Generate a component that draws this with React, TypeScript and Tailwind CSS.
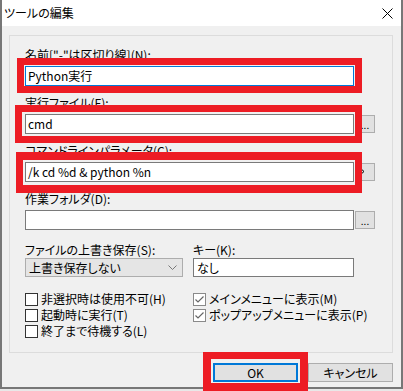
import React from "react";

function Field({ label, value, focused, btn }: { label: string; value: string; focused?: boolean; btn?: string }) {
  return (
    <div className="flex flex-col">
      <div className="h-[16px] leading-[16px] whitespace-nowrap">{label}</div>
      <div className="mt-[3px] flex items-center">
        <div
          className={`w-[329px] h-[20px] bg-white border ${focused ? "border-[#0078d7]" : "border-[#7a7a7a]"} flex items-center pl-[2px] leading-[16px] whitespace-nowrap`}
        >
          {value}
        </div>
        {btn && (
          <div className="ml-[1px] w-[20px] h-[18px] bg-[#e1e1e1] border border-[#adadad] flex items-end justify-center text-[10px] leading-[12px] pb-[1px]">
            {btn === ">" ? (
              <svg width="6" height="9" viewBox="0 0 6 9" className="mb-[3px] -ml-[6px]">
                <path d="M0.5 0.5L5 4.5L0.5 8.5" stroke="#000" strokeWidth="1" fill="none" />
              </svg>
            ) : (
              <span>...</span>
            )}
          </div>
        )}
      </div>
    </div>
  );
}

function Check({ label, checked }: { label: string; checked?: boolean }) {
  return (
    <div className="h-[16px] flex items-center whitespace-nowrap">
      <div
        className={`w-[13px] h-[13px] bg-white border ${checked ? "border-[#8a8a8a]" : "border-[#333333]"} flex items-center justify-center`}
      >
        {checked && (
          <svg width="11" height="11" viewBox="0 0 11 11">
            <path d="M1.5 5.5L4 8L9.5 2.5" stroke="#666" strokeWidth="1.2" fill="none" />
          </svg>
        )}
      </div>
      <span className="ml-[3px] leading-[16px]">{label}</span>
    </div>
  );
}

export default function App() {
  return (
    <div className="relative w-[403px] h-[391px] bg-[#e8e8e8] font-['Noto_Sans_CJK_JP',sans-serif] [font-feature-settings:'palt'] text-[12px] leading-[16px] text-black overflow-hidden">
      <div className="flex flex-col w-[403px] h-[389px] bg-[#f0f0f0] border-l-2 border-r-2 border-b-2 border-[#777777]">
        {/* title bar */}
        <div className="h-[26px] shrink-0 bg-white flex items-center justify-between pl-[2px] pr-[8px]">
          <span className="leading-[16px]">ツールの編集</span>
          <svg width="11" height="11" viewBox="0 0 11 11">
            <path d="M0.5 0.5L10.5 10.5M10.5 0.5L0.5 10.5" stroke="#000" strokeWidth="1" />
          </svg>
        </div>

        {/* group box */}
        <div className="mt-[9px] ml-[7px] w-[384px] h-[318px] shrink-0 border border-[#dcdcdc] pt-[11px] pl-[15px] flex flex-col">
          <Field label={'名前["-"は区切り線](N):'} value="Python実行" focused />
          <div className="mt-[9px]">
            <Field label="実行ファイル(F):" value="cmd" btn="..." />
          </div>
          <div className="mt-[9px]">
            <Field label="コマンドラインパラメータ(C):" value="/k cd %d & python %n" btn=">" />
          </div>
          <div className="mt-[9px]">
            <Field label="作業フォルダ(D):" value="" btn="..." />
          </div>

          <div className="mt-[12px] flex">
            <div className="w-[168px] flex flex-col">
              <div className="h-[16px] whitespace-nowrap">ファイルの上書き保存(S):</div>
              <div className="w-[158px] h-[19px] bg-[#e5e5e5] border border-[#adadad] flex items-center justify-between pl-[3px] pr-[5px]">
                <span className="whitespace-nowrap">上書き保存しない</span>
                <svg width="9" height="5" viewBox="0 0 9 5">
                  <path d="M0.5 0.5L4.5 4.5L8.5 0.5" stroke="#777" strokeWidth="1" fill="none" />
                </svg>
              </div>
            </div>
            <div className="flex flex-col">
              <div className="h-[16px] whitespace-nowrap">キー(K):</div>
              <div className="w-[161px] h-[19px] bg-white border border-[#7a7a7a] flex items-center pl-[3px]">なし</div>
            </div>
          </div>

          <div className="mt-[14px] flex">
            <div className="w-[168px] flex flex-col">
              <Check label="非選択時は使用不可(H)" />
              <Check label="起動時に実行(T)" />
              <Check label="終了まで待機する(L)" />
            </div>
            <div className="flex flex-col">
              <Check label="メインメニューに表示(M)" checked />
              <Check label="ポップアップメニューに表示(P)" checked />
            </div>
          </div>
        </div>

        {/* buttons */}
        <div className="mt-[10px] mr-[8px] flex justify-end gap-[10px]">
          <div className="w-[85px] h-[19px] bg-[#e1e1e1] border-2 border-[#0078d7] flex items-center justify-center">OK</div>
          <div className="w-[85px] h-[19px] bg-[#e1e1e1] border border-[#adadad] flex items-center justify-center">キャンセル</div>
        </div>
      </div>

      {/* red annotation boxes */}
      <div className="absolute left-[17px] top-[58px] w-[345px] h-[35px] border-[7px] border-[#ed1c24]" />
      <div className="absolute left-[15px] top-[105px] w-[347px] h-[38px] border-[7px] border-[#ed1c24]" />
      <div className="absolute left-[16px] top-[152px] w-[346px] h-[41px] border-[7px] border-t-[8px] border-b-[8px] border-[#ed1c24]" />
      <div className="absolute left-[203px] top-[352px] w-[105px] h-[39px] border-[8px] border-t-[7px] border-[#ed1c24]" />
    </div>
  );
}
